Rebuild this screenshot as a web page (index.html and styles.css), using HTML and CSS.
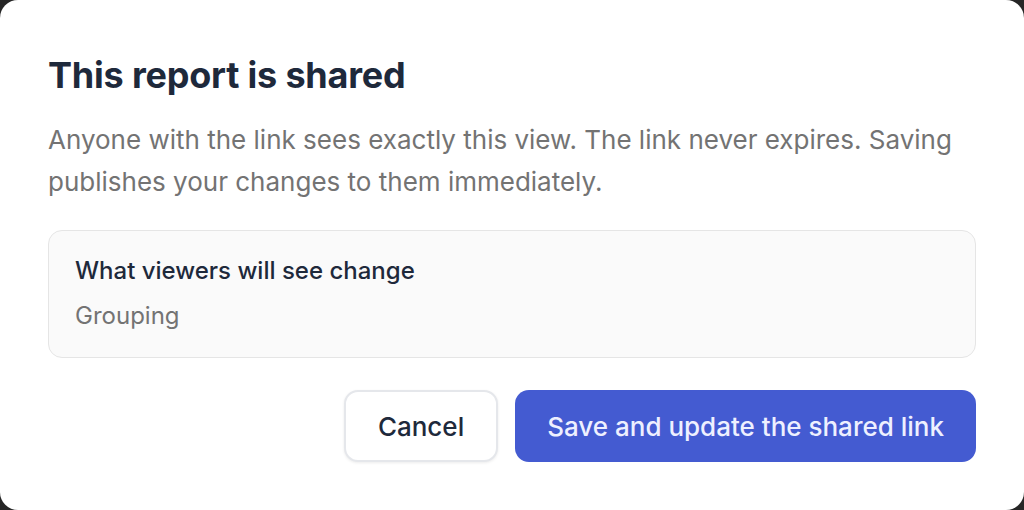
FILE: index.html
```html
<!DOCTYPE html>
<html lang="en">
<head>
    <meta charset="UTF-8">
    <meta name="viewport" content="width=device-width, initial-scale=1.0">
    <title>Share report</title>
    <link rel="stylesheet" href="styles.css">
</head>
<body>
    <div class="dialog">
        <h2 class="dialog-title">This report is shared</h2>
        <p class="dialog-text">Anyone with the link sees exactly this view. The link never expires. Saving publishes your changes to them immediately.</p>

        <!-- Summary of what changes -->
        <div class="changes">
            <div class="changes-title">What viewers will see change</div>
            <div class="changes-item">Grouping</div>
        </div>

        <!-- Actions -->
        <div class="actions">
            <button class="btn btn-cancel">Cancel</button>
            <button class="btn btn-save">Save and update the shared link</button>
        </div>
    </div>
</body>
</html>
```

FILE: styles.css
```css
/* Dark backdrop behind the dialog */
body {
    margin: 0;
    background: #262626;
    font-family: Inter, "Noto Sans", sans-serif;
}
.dialog {
    box-sizing: border-box;
    width: 1024px;
    height: 510px;
    background: #ffffff;
    border-radius: 18px;
    padding: 53px 48px 48px;
}
.dialog-title {
    margin: 0;
    font-size: 36px;
    line-height: 44px;
    font-weight: 700;
    color: #1e293b;
    letter-spacing: -0.2px;
}
.dialog-text {
    margin: 22px 0 27px;
    font-size: 26px;
    line-height: 42px;
    color: #737373;
}
/* Grey box listing changes */
.changes {
    background: #fafafa;
    border: 1px solid #e5e5e5;
    border-radius: 14px;
    padding: 25px 26px 26px;
}
.changes-title {
    font-size: 24px;
    line-height: 30px;
    font-weight: 500;
    color: #1e293b;
}
.changes-item {
    margin-top: 15px;
    font-size: 24px;
    line-height: 30px;
    color: #737373;
}
/* Button row, right aligned */
.actions {
    display: flex;
    justify-content: flex-end;
    gap: 17px;
    margin-top: 32px;
}
.btn {
    height: 72px;
    padding: 0 32px;
    border-radius: 14px;
    font-family: inherit;
    font-size: 26px;
    font-weight: 500;
    cursor: pointer;
}
.btn-cancel {
    background: #ffffff;
    color: #1e293b;
    border: 2px solid #e5e7eb;
    box-shadow: 0 1px 3px rgba(0, 0, 0, 0.08);
}
.btn-save {
    background: #445bd1;
    color: #eef0ff;
    border: none;
}
```
